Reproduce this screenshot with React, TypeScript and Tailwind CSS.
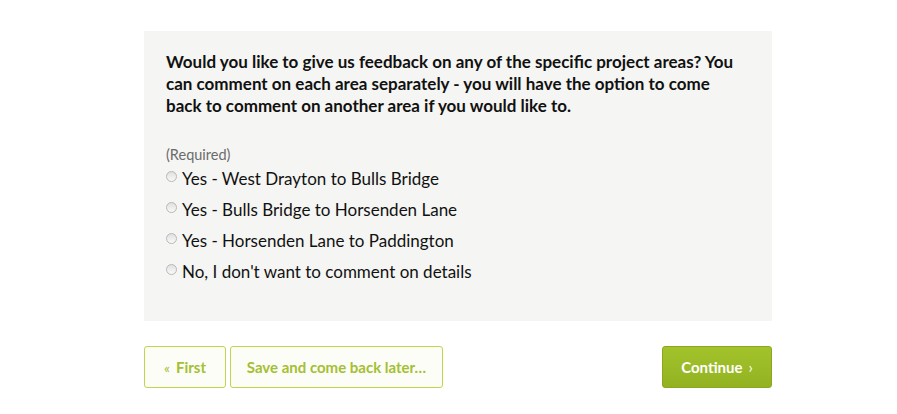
import React from "react";

const options = [
  "Yes - West Drayton to Bulls Bridge",
  "Yes - Bulls Bridge to Horsenden Lane",
  "Yes - Horsenden Lane to Paddington",
  "No, I don't want to comment on details",
];

export default function App() {
  return (
    <div className="min-h-[414px] bg-white pt-[31px]" style={{ fontFamily: "Lato, 'Open Sans', sans-serif" }}>
      <div className="ml-[144px] w-[628px]">
        <div className="bg-[#f5f5f3] px-[22px] pt-[20px] pb-[34px]">
          <p className="text-[17px] leading-[22px] font-bold text-[#111] pr-[10px]">
            Would you like to give us feedback on any of the specific project areas? You can comment on each area separately - you will have the option to come back to comment on another area if you would like to.
          </p>
          <div className="mt-[29px] text-[14.5px] leading-[17px] text-[#6b6b6b]">(Required)</div>
          <div className="flex flex-col">
            {options.map((o) => (
              <label key={o} className="flex items-center h-[31px] text-[17px] text-[#111]">
                <span className="w-[11px] h-[11px] rounded-full border border-[#b8b8b8] bg-gradient-to-b from-[#e0e0e0] to-[#fafafa] mr-[5px] -mt-[4px]" />
                {o}
              </label>
            ))}
          </div>
        </div>
        <div className="flex mt-[25px]">
          <button className="h-[42px] w-[82px] border border-[#bdd74a] rounded-[3px] bg-[#fdfdf8] text-[#a3c032] font-bold text-[15px] flex items-center justify-center">
            <span className="mr-[6px] text-[14px] font-normal">«</span>First
          </button>
          <button className="ml-[4px] h-[42px] w-[213px] border border-[#bdd74a] rounded-[3px] bg-[#fdfdf8] text-[#a3c032] font-bold text-[15px]">
            Save and come back later…
          </button>
          <div className="flex-1" />
          <button className="h-[42px] w-[110px] rounded-[3px] bg-gradient-to-b from-[#a3c32c] to-[#93b221] border border-[#8aa71e] text-white font-bold text-[15px] flex items-center justify-center">
            Continue<span className="ml-[6px] font-normal">›</span>
          </button>
        </div>
      </div>
    </div>
  );
}
